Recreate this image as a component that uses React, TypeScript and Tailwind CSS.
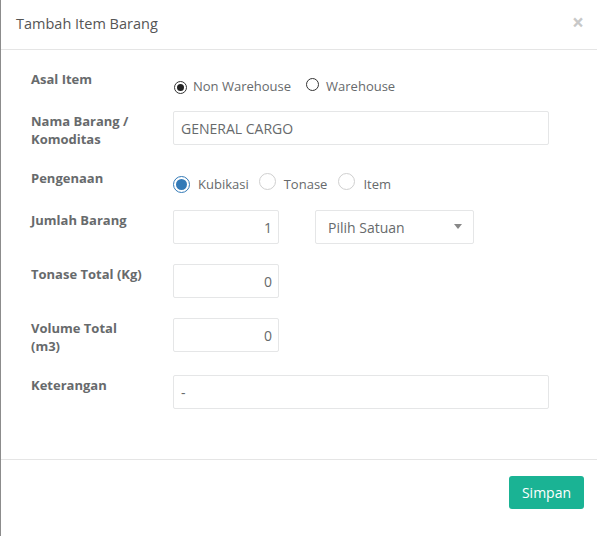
import React from "react";

const NativeRadio = ({ checked }: { checked?: boolean }) => (
  <span className="inline-flex h-[13px] w-[13px] items-center justify-center rounded-full border border-[#333] bg-white">
    {checked && <span className="h-[7px] w-[7px] rounded-full bg-[#222]" />}
  </span>
);

const CustomRadio = ({ checked }: { checked?: boolean }) => (
  <span
    className={
      "inline-flex h-[17px] w-[17px] items-center justify-center rounded-full border bg-white " +
      (checked ? "border-[#337ab7]" : "border-[#cfcfcf]")
    }
  >
    {checked && <span className="h-[11px] w-[11px] rounded-full bg-[#337ab7]" />}
  </span>
);

const Label = ({ children }: { children: React.ReactNode }) => (
  <div className="w-[142px] shrink-0 pt-px pr-3 text-[13px] font-bold leading-[18px] text-[#676a6c]">
    {children}
  </div>
);

const inputCls =
  "h-[34px] border border-[#e5e6e7] rounded-[2px] bg-white px-[7px] flex items-center text-[14px] text-[#676a6c]";

export default function App() {
  return (
    <div
      className="h-[536px] w-[597px] overflow-hidden border-l border-[#8c8c8c] bg-white"
      style={{ fontFamily: '"Open Sans", "Liberation Sans", sans-serif' }}
    >
      {/* Header */}
      <div className="flex h-[50px] items-center justify-between border-b border-[#e5e5e5] pl-[15px] pr-[13px]">
        <div className="text-[14.5px] text-[#555] pb-[2px]">Tambah Item Barang</div>
        <div className="text-[21px] font-bold leading-none text-[#c8c8c8] pb-[4px]">×</div>
      </div>

      {/* Body */}
      <div className="flex h-[409px] flex-col pl-[30px] pt-[19px]">
        <div className="flex h-[42px]">
          <Label>Asal Item</Label>
          <div className="flex items-center pt-[18px] h-[18px] text-[13px] text-[#676a6c]">
            <span className="ml-px"><NativeRadio checked /></span>
            <span className="ml-[6px]">Non Warehouse</span>
            <span className="ml-[15px]"><NativeRadio /></span>
            <span className="ml-[7px]">Warehouse</span>
          </div>
        </div>

        <div className="flex h-[57px]">
          <Label>
            Nama Barang /<br />Komoditas
          </Label>
          <div className={inputCls + " w-[376px]"}>GENERAL CARGO</div>
        </div>

        <div className="flex h-[42px]">
          <Label>Pengenaan</Label>
          <div className="flex h-[18px] items-center pt-[15px] text-[13px] text-[#676a6c]">
            <CustomRadio checked />
            <span className="ml-[8px]">Kubikasi</span>
            <span className="ml-[10px]"><CustomRadio /></span>
            <span className="ml-[8px]">Tonase</span>
            <span className="ml-[11px]"><CustomRadio /></span>
            <span className="ml-[8px]">Item</span>
          </div>
        </div>

        <div className="flex h-[54px]">
          <Label>Jumlah Barang</Label>
          <div className={inputCls + " w-[106px] justify-end pr-[6px]"}>1</div>
          <div className={inputCls + " ml-[36px] w-[159px] justify-between pl-[12px] pr-[11px] text-[13px]"}>
            <span>Pilih Satuan</span>
            <svg width="8" height="6" viewBox="0 0 8 6">
              <path d="M0 0 L8 0 L4 5 Z" fill="#888" />
            </svg>
          </div>
        </div>

        <div className="flex h-[54px]">
          <Label>Tonase Total (Kg)</Label>
          <div className={inputCls + " w-[106px] justify-end pr-[6px]"}>0</div>
        </div>

        <div className="flex h-[57px]">
          <Label>
            Volume Total
            <br />
            (m3)
          </Label>
          <div className={inputCls + " w-[106px] justify-end pr-[6px]"}>0</div>
        </div>

        <div className="flex">
          <Label>Keterangan</Label>
          <div className={inputCls + " w-[376px]"}>-</div>
        </div>
      </div>

      {/* Footer */}
      <div className="flex justify-end border-t border-[#e5e5e5] pr-[13px] pt-[16px]">
        <button className="h-[33px] w-[75px] rounded-[3px] bg-[#1ab394] text-[14px] text-white">
          Simpan
        </button>
      </div>
    </div>
  );
}
